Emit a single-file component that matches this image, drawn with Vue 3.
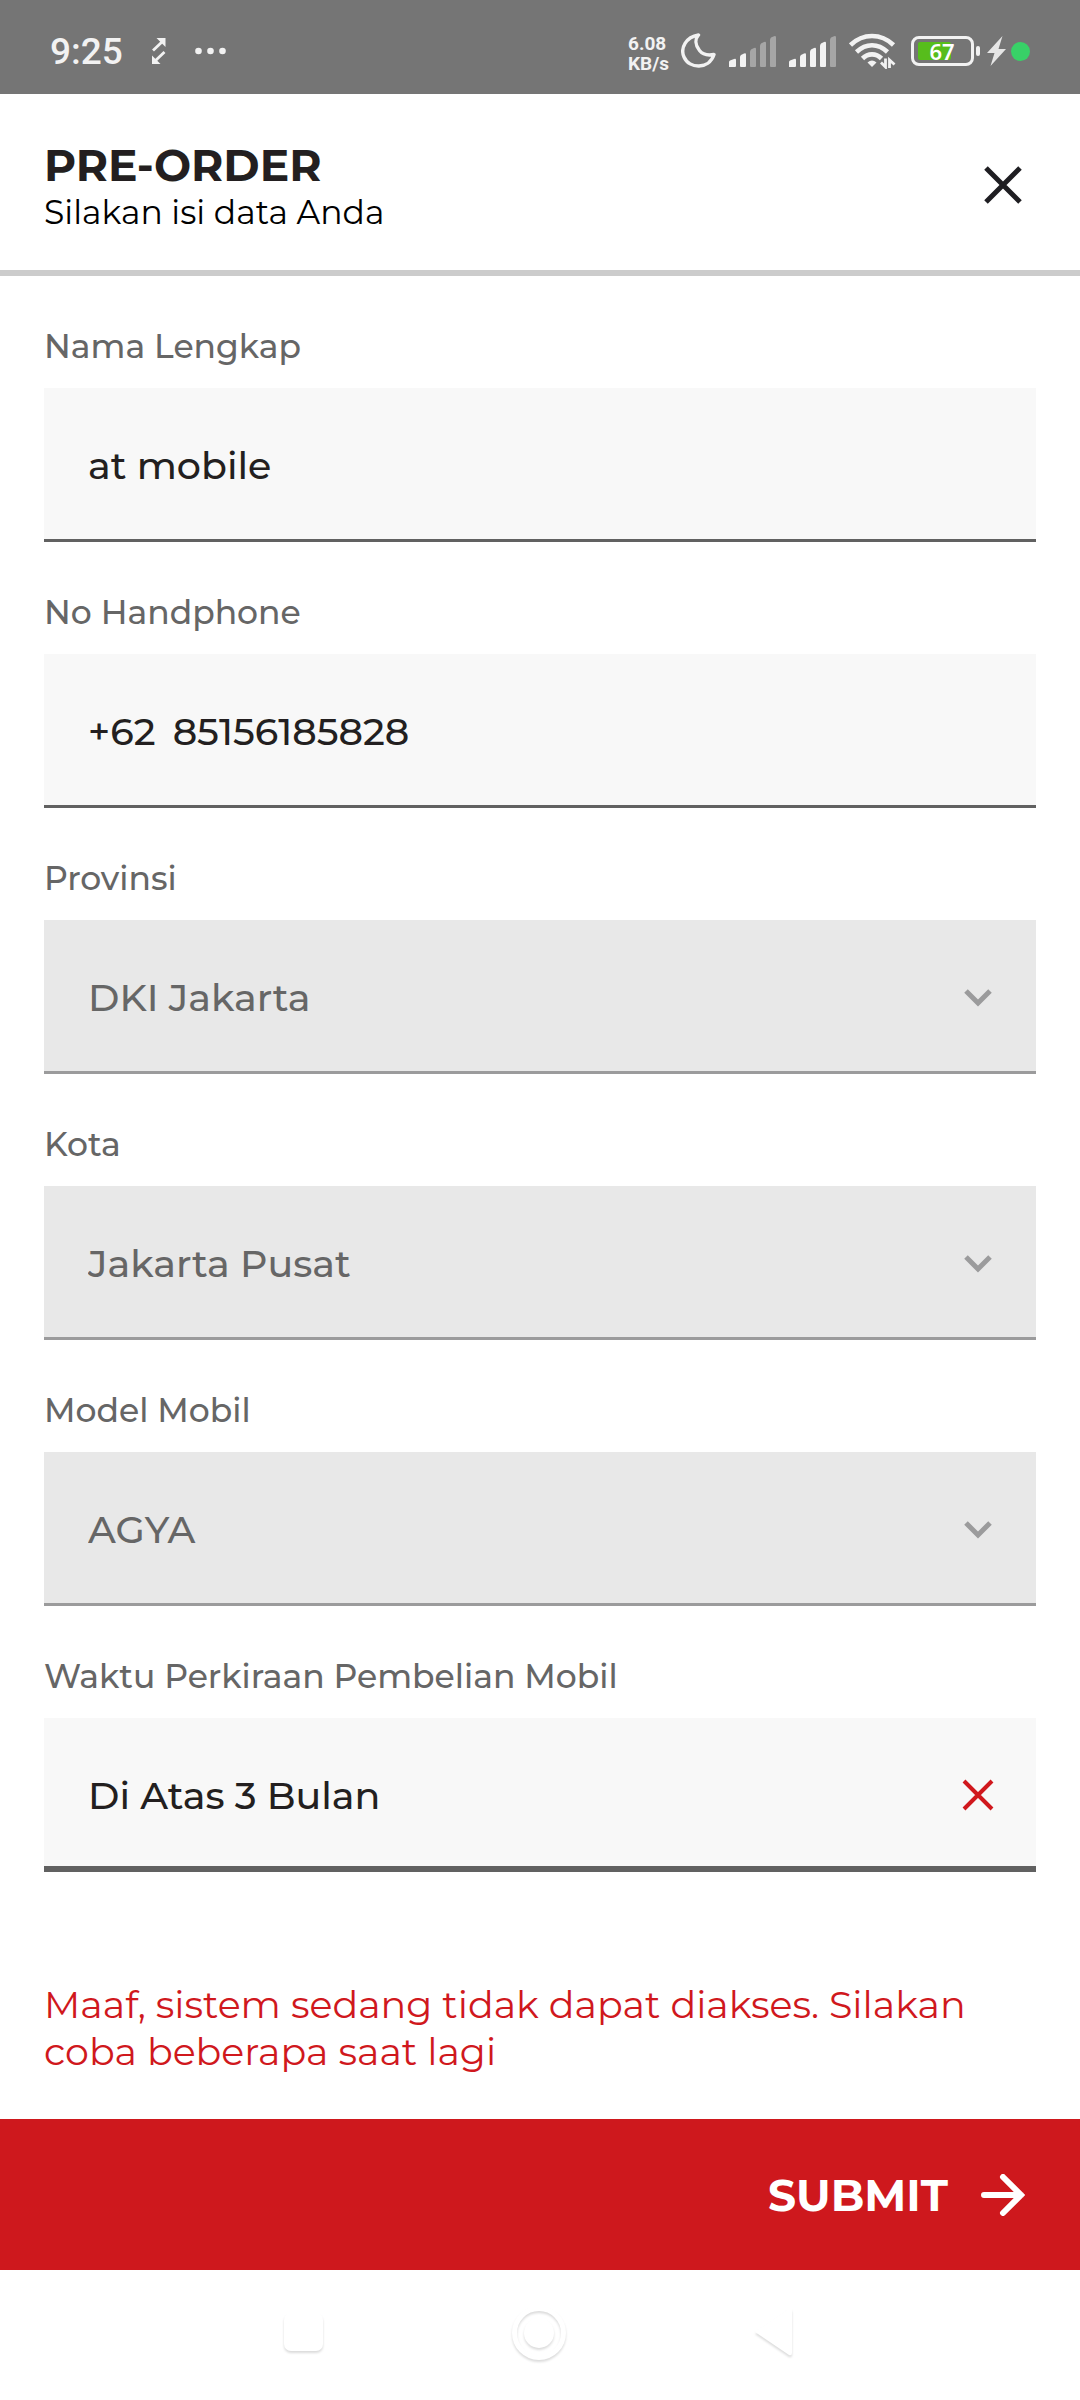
<script setup>
import { ref } from 'vue'

const nama = ref('at mobile')
const telepon = ref('85156185828')
const waktu = ref('Di Atas 3 Bulan')

const lockedFields = [
  { id: 'provinsi', label: 'Provinsi', value: 'DKI Jakarta' },
  { id: 'kota', label: 'Kota', value: 'Jakarta Pusat' },
  { id: 'model', label: 'Model Mobil', value: 'AGYA' },
]

const signals = [2, 4]
const bars = [
  'M0 31V26Q0 25 1 24.500L5 23Q7 22 7 24V30Q7 31 6 31H1Q0 31 0 31Z',
  'M11 30V21Q11 20 12 19L15 17.500Q17 16.500 17 18.500V30Q17 31 16 31H12Q11 31 11 30Z',
  'M21 30V16Q21 14.500 22 13.500L25 12Q27 11 27 13V30Q27 31 26 31H22Q21 31 21 30Z',
  'M31 30V10Q31 8.500 32 7.500L35 6Q37 5 37 7V30Q37 31 36 31H32Q31 31 31 30Z',
  'M41 30V4Q41 2.500 42 1.500L45 .2Q47 -.5 47 1.500V30Q47 31 46 31H42Q41 31 41 30Z',
]
</script>

<template>
  <div class="screen">
    <div class="status">
      <div class="status-left">
        <span class="clock">9:25</span>
        <svg class="swap" width="14" height="26" viewBox="0 0 14 26">
          <path d="M4.500 0H13.500V9Z" fill="#f2f2f2" />
          <path d="M0 17.500V26H8.500Z" fill="#f2f2f2" />
          <path d="M11 3L1 12.500M2.500 23.500L12.500 14" stroke="#f2f2f2" stroke-width="2.800" />
        </svg>
        <svg width="31" height="8" viewBox="0 0 31 8" fill="#f2f2f2">
          <circle cx="3.500" cy="4" r="3.300" />
          <circle cx="15.500" cy="4" r="3.300" />
          <circle cx="27.500" cy="4" r="3.300" />
        </svg>
      </div>
      <div class="status-right">
        <div class="speed">
          <span>6.08</span>
          <span>KB/s</span>
        </div>
        <svg class="moon" width="36" height="36" viewBox="0 0 36 36">
          <path d="M17.500 2C5 4 -1 15 3 24C8 36 28 37 33 21.500C28 22.500 22 22 18.500 17.500C14 12 14 6 17.500 2Z" fill="none" stroke="#f2f2f2" stroke-width="3.400" stroke-linejoin="round" />
        </svg>
        <svg v-for="level in signals" :key="level" class="signal" width="48" height="31" viewBox="0 0 48 31">
          <path v-for="(d, i) in bars" :key="i" :d="d" :fill="i < level ? '#f2f2f2' : '#a6a6a6'" />
        </svg>
        <svg class="wifi" width="47" height="36" viewBox="0 0 47 36" fill="none" stroke="#f2f2f2" stroke-width="4.600">
          <path d="M1.500 12C14 0 32 0 44.500 12" />
          <path d="M7.500 19C17 10 29 10 38.500 19" />
          <path d="M13.500 25.500C19 20 27 20 32.500 25.500" />
          <path d="M18.500 29.500Q23 25.500 27.500 29.500L23 34Z" fill="#f2f2f2" stroke="none" />
          <path d="M36.500 25.500V34L32 29.500M40.500 35V27L45.500 31.500" stroke-width="2.800" />
        </svg>
        <svg class="battery" width="70" height="30" viewBox="0 0 70 30">
          <rect x="1.500" y="1.500" width="60" height="27" rx="6.500" fill="none" stroke="#f2f2f2" stroke-width="3" />
          <rect x="7" y="6" width="33" height="18" rx="2" fill="#57bd1c" />
          <rect x="65" y="10" width="4" height="10" rx="2" fill="#f2f2f2" />
          <text x="31" y="24" text-anchor="middle" class="level">67</text>
        </svg>
        <svg class="bolt" width="19" height="30" viewBox="0 0 19 30">
          <path d="M15.500 0L0 17H7.500L3.500 30L19 13H11.500Z" fill="#e6e6e6" />
        </svg>
        <span class="dot"></span>
      </div>
    </div>

    <header class="header">
      <div class="heading">
        <h1>PRE-ORDER</h1>
        <p>Silakan isi data Anda</p>
      </div>
      <button type="button" class="icon-button" aria-label="Tutup">
        <svg width="38" height="38" viewBox="0 0 38 38">
          <path d="M2 2L36 36M36 2L2 36" stroke="#1f1e22" stroke-width="5" />
        </svg>
      </button>
    </header>

    <form class="form" @submit.prevent>
      <div class="field">
        <label for="nama">Nama Lengkap</label>
        <div class="box">
          <input id="nama" v-model="nama" type="text" />
        </div>
      </div>

      <div class="field">
        <label for="telepon">No Handphone</label>
        <div class="box">
          <span class="prefix">+62</span>
          <input id="telepon" v-model="telepon" type="tel" />
        </div>
      </div>

      <div v-for="item in lockedFields" :key="item.id" class="field">
        <label :for="item.id">{{ item.label }}</label>
        <div class="box locked">
          <select :id="item.id" disabled>
            <option>{{ item.value }}</option>
          </select>
          <svg class="chevron" width="28" height="18" viewBox="0 0 28 18">
            <path d="M2 2L14 14L26 2" fill="none" stroke="#9b9b9c" stroke-width="5" />
          </svg>
        </div>
      </div>

      <div class="field">
        <label for="waktu">Waktu Perkiraan Pembelian Mobil</label>
        <div class="box active">
          <select id="waktu" v-model="waktu">
            <option>Di Atas 3 Bulan</option>
          </select>
          <button type="button" class="icon-button" aria-label="Hapus pilihan" @click="waktu = ''">
            <svg width="32" height="32" viewBox="0 0 32 32">
              <path d="M2 2L30 30M30 2L2 30" stroke="#d0181d" stroke-width="4" />
            </svg>
          </button>
        </div>
      </div>

      <p class="error" role="alert">Maaf, sistem sedang tidak dapat diakses. Silakan coba beberapa saat lagi</p>

      <button type="submit" class="submit">
        <span>SUBMIT</span>
        <svg width="44" height="42" viewBox="0 0 44 42">
          <path d="M3 21H40M22 3L40 21L22 39" fill="none" stroke="#fff" stroke-width="6" stroke-linecap="round" stroke-linejoin="miter" />
        </svg>
      </button>
    </form>

    <nav class="nav">
      <button type="button" aria-label="Aplikasi terbaru">
        <svg width="60" height="60" viewBox="0 0 60 60">
          <rect x="10" y="10" width="39" height="38" rx="7" fill="#fff" />
        </svg>
      </button>
      <button type="button" aria-label="Beranda">
        <svg width="60" height="60" viewBox="0 0 60 60">
          <circle cx="30" cy="30" r="24.500" fill="none" stroke="#fff" stroke-width="5" />
          <circle cx="30" cy="30" r="15" fill="#fff" />
        </svg>
      </button>
      <button type="button" aria-label="Kembali">
        <svg width="60" height="60" viewBox="0 0 60 60">
          <path d="M11 29L45 6Q48 5 48 8V50Q48 53 45 52Z" fill="#fff" />
        </svg>
      </button>
    </nav>
  </div>
</template>

<style>
body {
  margin: 0;
  background: #fff;
}
</style>

<style scoped>
.screen {
  display: flex;
  flex-direction: column;
  min-height: 100vh;
  background: #fff;
  color: #231f20;
  font-family: Montserrat, Inter, sans-serif;
}

svg {
  display: block;
  flex: none;
}

button {
  margin: 0;
  padding: 0;
  border: 0;
  background: none;
  font: inherit;
  color: inherit;
}

.status {
  display: flex;
  justify-content: space-between;
  box-sizing: border-box;
  height: 94px;
  padding: 8px 50px 0;
  background: #757575;
  color: #f2f2f2;
  font-family: Roboto, sans-serif;
}

.status-left,
.status-right {
  display: flex;
  align-items: center;
}

.clock {
  font-size: 37px;
  font-weight: 500;
}

.swap {
  margin: 0 29px;
}

.speed {
  display: flex;
  flex-direction: column;
  padding-top: 5px;
  font-size: 19px;
  line-height: 20px;
  font-weight: 700;
}

.moon {
  margin-left: 12px;
}

.signal {
  margin-left: 12px;
}

.wifi {
  margin-left: 12px;
}

.battery {
  margin-left: 15px;
}

.level {
  fill: #fff;
  font-family: "Noto Sans", sans-serif;
  font-size: 22px;
  font-weight: 600;
}

.bolt {
  margin: 0 5px 0 6px;
}

.dot {
  width: 19px;
  height: 19px;
  border-radius: 50%;
  background: #38d167;
}

.header {
  display: flex;
  justify-content: space-between;
  align-items: center;
  box-sizing: border-box;
  height: 182px;
  padding: 6px 58px 0 44px;
  border-bottom: 6px solid #ccc;
}

.heading {
  padding-top: 6px;
}

.header h1 {
  margin: 0;
  font-size: 44px;
  line-height: 48px;
  font-weight: 700;
}

.header p {
  margin: 0;
  color: #000;
  font-size: 33px;
  line-height: 46px;
  font-weight: 400;
}

.form {
  display: flex;
  flex: 1;
  flex-direction: column;
}

.field {
  padding: 0 44px;
}

.field label {
  display: block;
  padding: 48px 0 20px;
  color: #666;
  font-size: 33px;
  line-height: 44px;
  font-weight: 500;
}

.box {
  display: flex;
  align-items: center;
  box-sizing: border-box;
  height: 154px;
  padding: 4px 42px 0 44px;
  border-bottom: 3px solid #616161;
  background: #f8f8f8;
  font-size: 38px;
  font-weight: 500;
}

.box input,
.box select {
  flex: 1;
  min-width: 0;
  margin: 0;
  padding: 0;
  border: 0;
  outline: 0;
  appearance: none;
  background: transparent;
  color: #231f20;
  font: inherit;
  opacity: 1;
}

.prefix {
  margin-right: 17px;
}

.box.locked {
  padding-right: 44px;
  border-color: #9b9b9c;
  background: #e8e8e8;
}

.box.locked select {
  color: #666;
}

.box.active {
  padding-top: 6px;
  border-bottom-width: 6px;
}

.error {
  margin: 109px 44px 44px;
  color: #d0181d;
  font-size: 38px;
  line-height: 47px;
  font-weight: 400;
}

.submit {
  display: flex;
  justify-content: flex-end;
  align-items: center;
  gap: 33px;
  height: 151px;
  margin-top: auto;
  padding: 0 55px;
  background: #ce181d;
  color: #fff;
  font-size: 44px;
  font-weight: 700;
}

.nav {
  display: flex;
  justify-content: center;
  align-items: center;
  gap: 175px;
  box-sizing: border-box;
  height: 130px;
  padding: 0 2px 4px 0;
}

.nav svg {
  filter: drop-shadow(0 2px 1px rgba(0, 0, 0, 0.14));
}
</style>
